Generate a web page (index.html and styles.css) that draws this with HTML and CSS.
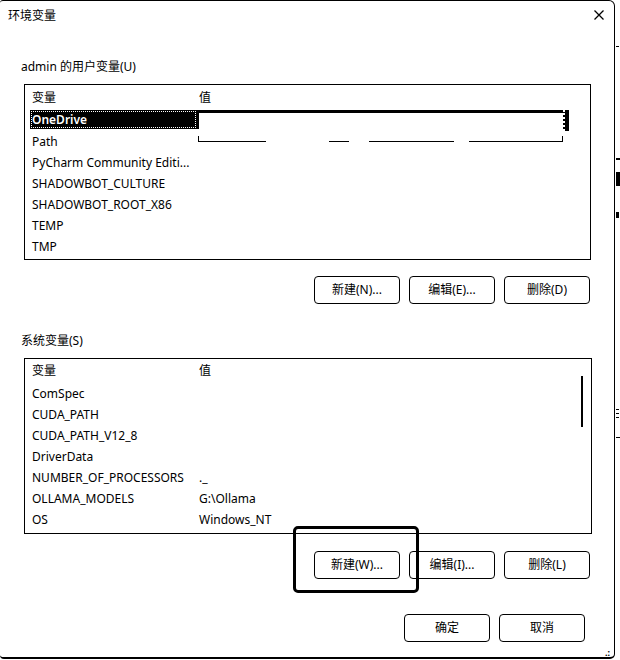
FILE: index.html
```html
<!DOCTYPE html>
<html lang="zh-CN">
<head>
<meta charset="utf-8">
<title>环境变量</title>
<link rel="stylesheet" href="styles.css">
</head>
<body>
<div class="dialog">
  <div class="titlebar">
    <span class="title">环境变量</span>
    <span class="close"><svg width="10" height="10" viewBox="0 0 10 10"><path d="M0.5 0.5L9.5 9.5M9.5 0.5L0.5 9.5" stroke="#000" stroke-width="1.3" fill="none"/></svg></span>
  </div>
  <div class="content">
    <div class="label label-user">admin 的用户变量(U)</div>
    <div class="list list-user">
      <div class="row head"><div class="name">变量</div><div class="val">值</div></div>
      <div class="row selected"><div class="name"><span class="hl">OneDrive</span></div><div class="val"><div class="selval"><span class="selblock"></span></div></div></div>
      <div class="row"><div class="name">Path</div><div class="val"><span class="redact"></span></div></div>
      <div class="row"><div class="name">PyCharm Community Editi...</div><div class="val"></div></div>
      <div class="row"><div class="name">SHADOWBOT_CULTURE</div><div class="val"></div></div>
      <div class="row"><div class="name">SHADOWBOT_ROOT_X86</div><div class="val"></div></div>
      <div class="row"><div class="name">TEMP</div><div class="val"></div></div>
      <div class="row"><div class="name">TMP</div><div class="val"></div></div>
    </div>
    <div class="buttons buttons-user">
      <div class="btn">新建(N)...</div>
      <div class="btn">编辑(E)...</div>
      <div class="btn">删除(D)</div>
    </div>
    <div class="label label-sys">系统变量(S)</div>
    <div class="list list-sys">
      <div class="row head"><div class="name">变量</div><div class="val">值</div></div>
      <div class="row"><div class="name">ComSpec</div><div class="val"></div></div>
      <div class="row"><div class="name">CUDA_PATH</div><div class="val"></div></div>
      <div class="row"><div class="name">CUDA_PATH_V12_8</div><div class="val"></div></div>
      <div class="row"><div class="name">DriverData</div><div class="val"></div></div>
      <div class="row"><div class="name">NUMBER_OF_PROCESSORS</div><div class="val">._</div></div>
      <div class="row"><div class="name">OLLAMA_MODELS</div><div class="val">G:\Ollama</div></div>
      <div class="row"><div class="name">OS</div><div class="val">Windows_NT</div></div>
      <div class="scrollbar"></div>
    </div>
    <div class="buttons buttons-sys">
      <div class="btn">新建(W)...</div>
      <div class="btn">编辑(I)...</div>
      <div class="btn">删除(L)</div>
    </div>
    <div class="buttons buttons-ok">
      <div class="btn">确定</div>
      <div class="btn">取消</div>
    </div>
  </div>
  <div class="annotation"></div>
  <span class="grip">.:</span>
</div>
<div class="behind">
  <span class="mark m1"></span>
  <span class="mark m2"></span>
  <span class="mark m3"></span>
  <span class="mark m4"></span>
  <span class="mark m5"></span>
  <span class="mark m6"></span>
</div>
</body>
</html>
```
FILE: styles.css
```css
html, body {
  margin: 0;
  padding: 0;
  background: #fff;
}
body {
  position: relative;
  width: 620px;
  height: 660px;
  overflow: hidden;
  font-family: "Noto Sans", "Noto Sans CJK SC", sans-serif;
  font-size: 12px;
  color: #000;
}
.dialog {
  position: relative;
  width: 615px;
  height: 659px;
  box-sizing: border-box;
  border-top: 1px solid #000;
  border-right: 1px solid #000;
  border-bottom: 2px solid #000;
  border-top-left-radius: 3px;
  border-top-right-radius: 6px;
  border-bottom-right-radius: 5px;
  border-bottom-left-radius: 4px;
  background: #fff;
}
.titlebar {
  display: flex;
  justify-content: space-between;
  align-items: center;
  height: 28px;
  padding: 0 10px 0 8px;
}
.title {
  line-height: 28px;
  font-family: "Noto Sans CJK SC", sans-serif;
}
.close {
  display: flex;
  align-items: center;
  height: 28px;
}
.content {
  display: flex;
  flex-direction: column;
  padding: 0 24px 0 20px;
}
.label {
  line-height: 20px;
  height: 20px;
}
.label-user { margin-top: 28px; margin-left: 1px; }
.label-sys { margin-top: 27px; margin-left: 1px; }
.list {
  position: relative;
  margin-left: 4px;
  width: 567px;
  box-sizing: border-box;
  border: 1px solid #000;
  padding-top: 2px;
  overflow: hidden;
}
.list-user { margin-top: 7px; height: 176px; }
.list-sys { margin-top: 7px; height: 176px; width: 568px; padding-top: 1px; }
.row {
  display: grid;
  grid-template-columns: 172px 1fr;
  height: 21px;
  line-height: 21px;
  white-space: nowrap;
}
.row.head { margin-bottom: 2px; }
.row .name {
  padding-left: 7px;
  overflow: hidden;
}
.row .val {
  padding-left: 2px;
}
.row.selected .name {
  padding-left: 5px;
}
.hl {
  display: block;
  height: 19px;
  line-height: 19px;
  padding-left: 2px;
  background: #000;
  color: #fff;
  font-weight: 600;
  outline: 1px dotted #fff;
  outline-offset: -2px;
}
.row.selected .val { padding-left: 0; }
.selval {
  display: flex;
  justify-content: flex-end;
  width: 372px;
  height: 19px;
  box-sizing: border-box;
  border-top: 3px solid #000;
  border-left: 2px solid #000;
}
.selblock {
  width: 6px;
  height: 21px;
  margin-top: -3px;
  background: #000;
  box-sizing: border-box;
  border-left: 2px dotted #fff;
  border-right: 1px solid #000;
}
.redact {
  display: block;
  margin-top: 5px;
  margin-left: -1px;
  width: 365px;
  height: 6px;
  box-sizing: border-box;
  border-left: 1px solid #000;
  border-right: 1px solid #000;
  background: linear-gradient(to right, #000 0 67px, transparent 67px 130px, #000 130px 150px, transparent 150px 170px, #000 170px 255px, transparent 255px 270px, #000 270px 100%) left bottom / 100% 1px no-repeat;
}
.scrollbar {
  position: absolute;
  left: 556px;
  top: 17px;
  width: 2px;
  height: 51px;
  background: #000;
}
.buttons {
  display: flex;
  justify-content: flex-end;
  gap: 9px;
}
.buttons-user { margin-top: 16px; }
.buttons-sys { margin-top: 17px; }
.buttons-ok { margin-top: 35px; padding-right: 5px; }
.btn {
  width: 86px;
  height: 28px;
  box-sizing: border-box;
  border: 1px solid #000;
  border-radius: 4px;
  display: flex;
  align-items: center;
  justify-content: center;
  background: #fff;
  line-height: 1;
}
.annotation {
  position: absolute;
  left: 293px;
  top: 525px;
  width: 126px;
  height: 67px;
  box-sizing: border-box;
  border: 3px solid #000;
  border-radius: 5px;
}
.grip {
  position: absolute;
  right: 4px;
  bottom: 0;
  font-size: 9px;
  line-height: 9px;
  font-weight: 700;
}
.behind {
  position: absolute;
  left: 615px;
  top: 0;
  width: 5px;
  height: 660px;
}
.mark {
  position: absolute;
  background: #000;
}
.m1 { left: 1px; top: 46px; width: 3px; height: 1px; }
.m2 { left: 1px; top: 158px; width: 4px; height: 2px; }
.m3 { left: 1px; top: 172px; width: 4px; height: 14px; }
.m4 { left: 1px; top: 212px; width: 3px; height: 6px; }
.m5 { left: 1px; top: 409px; width: 3px; height: 9px; background: repeating-linear-gradient(#000 0 1px, transparent 1px 4px); }
.m6 { left: 1px; top: 437px; width: 4px; height: 1px; }
```
